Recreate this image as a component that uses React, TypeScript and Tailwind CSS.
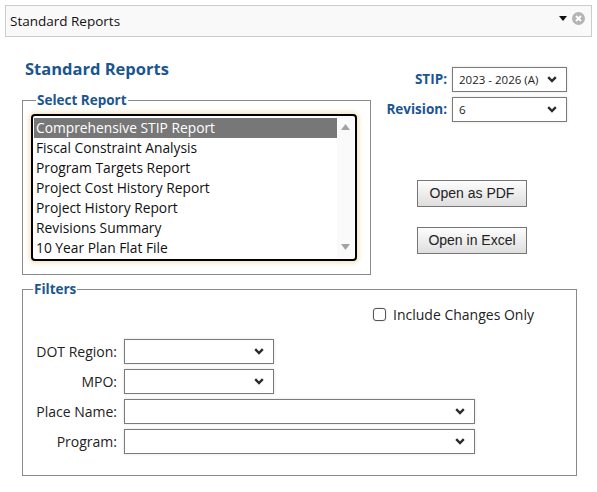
import React from "react";

const reports = [
  "Comprehensive STIP Report",
  "Fiscal Constraint Analysis",
  "Program Targets Report",
  "Project Cost History Report",
  "Project History Report",
  "Revisions Summary",
  "10 Year Plan Flat File",
];

const Chevron = () => (
  <svg width="10" height="7" viewBox="0 0 10 7" className="shrink-0">
    <path d="M1.2 1.2 5 5 8.8 1.2" fill="none" stroke="#2b2b2b" strokeWidth="2.4" />
  </svg>
);

interface DropProps {
  value?: string;
  width: string;
}

const Drop: React.FC<DropProps> = ({ value, width }) => (
  <div
    className={`${width} h-[25px] border border-[#7a7a7a] bg-white flex items-center justify-between pl-[6px] pr-[9px] shadow-[0_0_3px_rgba(0,0,0,0.12)] text-[11.5px] text-[#222] whitespace-nowrap`}
  >
    <span>{value}</span>
    <Chevron />
  </div>
);

const Btn: React.FC<{ label: string }> = ({ label }) => (
  <button className="w-[110px] h-[27px] border border-[#767676] bg-gradient-to-b from-[#fdfdfd] to-[#dedede] font-['Liberation_Sans',Arial,sans-serif] text-[14px] text-[#222]">
    {label}
  </button>
);

const FilterRow: React.FC<{ label: string; width: string }> = ({ label, width }) => (
  <div className="flex items-center">
    <span className="w-[95px] text-right pr-[7px] text-[14px] text-[#222]">{label}</span>
    <Drop width={width} />
  </div>
);

export default function App() {
  return (
    <div className="w-[597px] h-[492px] bg-white font-['Open_Sans',sans-serif] text-[#222] overflow-hidden">
      <div className="mx-[5px] mt-[5px] h-[32px] border border-[#cccccc] bg-[#f9f9f9] flex items-center justify-between pl-[4px] pr-[6px]">
        <span className="text-[13.5px] text-[#111]">Standard Reports</span>
        <div className="flex items-center gap-[5px] -mt-[6px]">
          <svg width="8" height="5" viewBox="0 0 8 5">
            <path d="M0 0h8L4 5z" fill="#111" />
          </svg>
          <svg width="13" height="13" viewBox="0 0 13 13">
            <circle cx="6.5" cy="6.5" r="6.5" fill="#b4b4b4" />
            <path d="M4 4l5 5M9 4l-5 5" stroke="#fff" strokeWidth="1.8" />
          </svg>
        </div>
      </div>

      <div className="flex pl-[22px] pt-[20px]">
        <div className="w-[349px]">
          <h1 className="ml-[3px] text-[16.5px] font-bold text-[#1b5591] leading-[24px]">Standard Reports</h1>
          <fieldset className="mt-[10px] border border-[#8a8a8a] h-[184px] px-[8px] pt-[5px]">
            <legend className="ml-[5px] px-[1px] text-[13.5px] font-bold text-[#1b5591] leading-[18px]">
              Select Report
            </legend>
            <div className="h-[147px] w-[326px] border-2 border-black rounded-[4px] shadow-[0_0_5px_2px_#f3e4c3] bg-white flex p-px">
              <div className="flex-1 pt-px">
                {reports.map((r, i) => (
                  <div
                    key={r}
                    className={`h-[20px] leading-[20px] pl-[2px] text-[13.8px] whitespace-nowrap ${
                      i === 0 ? "bg-[#777777] text-white" : "text-[#111]"
                    }`}
                  >
                    {r}
                  </div>
                ))}
              </div>
              <div className="w-[17px] bg-[#fafafa] flex flex-col items-center justify-between pt-[7px] pb-[8px]">
                <svg width="9" height="6" viewBox="0 0 9 6">
                  <path d="M0 6 4.5 0 9 6z" fill="#a3a3a3" />
                </svg>
                <svg width="9" height="6" viewBox="0 0 9 6">
                  <path d="M0 0h9L4.5 6z" fill="#a3a3a3" />
                </svg>
              </div>
            </div>
          </fieldset>
        </div>

        <div className="flex-1 flex flex-col items-start pt-[10px]">
          <div className="flex flex-col gap-[5px]">
            <div className="flex items-center">
              <span className="w-[81px] text-right pr-[5px] text-[13.5px] font-bold text-[#1b5591]">STIP:</span>
              <Drop width="w-[115px]" value="2023 - 2026 (A)" />
            </div>
            <div className="flex items-center">
              <span className="w-[81px] text-right pr-[5px] text-[13.5px] font-bold text-[#1b5591]">Revision:</span>
              <Drop width="w-[115px]" value="6" />
            </div>
          </div>
          <div className="ml-[46px] mt-[58px] flex flex-col gap-[20px]">
            <Btn label="Open as PDF" />
            <Btn label="Open in Excel" />
          </div>
        </div>
      </div>

      <fieldset className="ml-[22px] mt-[5px] w-[555px] h-[196px] border border-[#8a8a8a] px-[6px]">
        <legend className="ml-[4px] px-[1px] text-[13.5px] font-bold text-[#1b5591] leading-[18px]">Filters</legend>
        <div className="flex justify-end pr-[36px] pt-[6px]">
          <label className="flex items-center gap-[7px] text-[14px] text-[#222]">
            <span className="w-[13px] h-[13px] border border-[#555] rounded-[3px] bg-white shadow-[0_0_2px_rgba(0,0,0,0.2)]" />
            Include Changes Only
          </label>
        </div>
        <div className="mt-[14px] flex flex-col gap-[5px]">
          <FilterRow label="DOT Region:" width="w-[150px]" />
          <FilterRow label="MPO:" width="w-[150px]" />
          <FilterRow label="Place Name:" width="w-[351px]" />
          <FilterRow label="Program:" width="w-[351px]" />
        </div>
      </fieldset>
    </div>
  );
}
